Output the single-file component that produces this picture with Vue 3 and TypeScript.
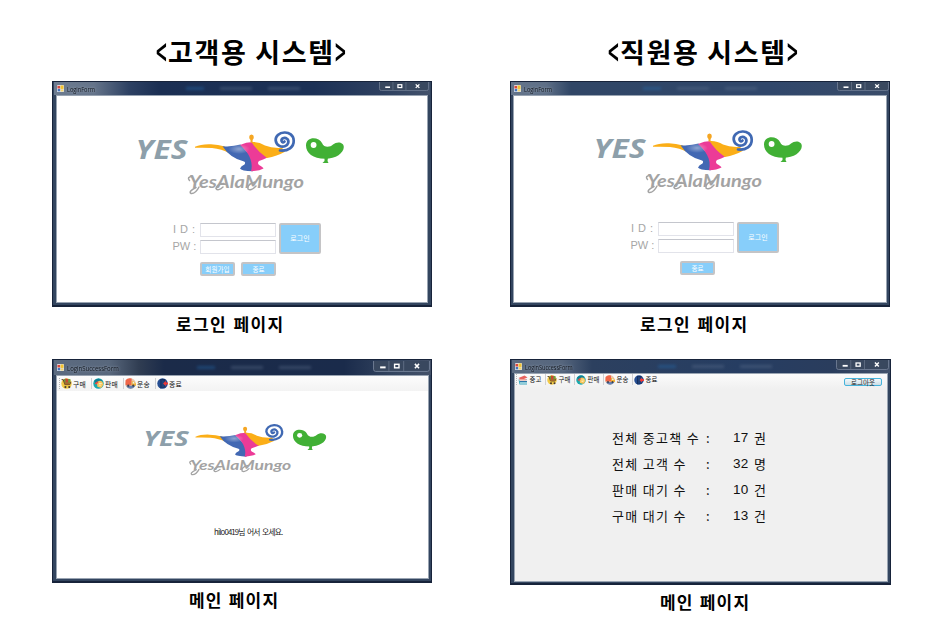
<script setup lang="ts">
interface ToolItem { icon: string; label: string }
interface Pane {
  id: string
  kind: 'login' | 'welcome' | 'stats'
  form: string
  caption: string
  signup?: boolean
  tools?: ToolItem[]
}
interface Column { id: string; heading: string; panes: Pane[] }

const buy: ToolItem = { icon: 'cart', label: '구매' }
const sell: ToolItem = { icon: 'sell', label: '판매' }
const ship: ToolItem = { icon: 'truck', label: '운송' }
const quit: ToolItem = { icon: 'exit', label: '종료' }
const used: ToolItem = { icon: 'books', label: '중고' }

const columns: Column[] = [
  {
    id: 'customer',
    heading: '고객용 시스템',
    panes: [
      { id: 'c-login', kind: 'login', form: 'LoginForm', caption: '로그인 페이지', signup: true },
      { id: 'c-main', kind: 'welcome', form: 'LoginSuccessForm', caption: '메인 페이지', tools: [buy, sell, ship, quit] },
    ],
  },
  {
    id: 'staff',
    heading: '직원용 시스템',
    panes: [
      { id: 's-login', kind: 'login', form: 'LoginForm', caption: '로그인 페이지' },
      { id: 's-main', kind: 'stats', form: 'LoginSuccessForm', caption: '메인 페이지', tools: [used, buy, sell, ship, quit] },
    ],
  },
]

const stats = [
  { label: '전체 중고책 수', value: 17, unit: '권' },
  { label: '전체 고객 수', value: 32, unit: '명' },
  { label: '판매 대기 수', value: 10, unit: '건' },
  { label: '구매 대기 수', value: 13, unit: '건' },
]
</script>

<template>
  <main class="board">
    <section v-for="col in columns" :key="col.id" class="column" :class="col.id">
      <h1 class="heading"><span class="angle">&lt;</span>{{ col.heading }}<span class="angle">&gt;</span></h1>
      <template v-for="pane in col.panes" :key="pane.id">
        <article class="window" :class="[pane.id, pane.kind]">
          <header class="titlebar">
            <svg class="app-icon" viewBox="0 0 8 8">
              <rect width="8" height="8" rx="1" fill="#dfe6f0" />
              <rect x="0.5" y="1" width="3" height="3" fill="#d9483c" />
              <rect x="4" y="0.5" width="3.5" height="4" fill="#f3c22e" />
              <rect x="0.8" y="4.6" width="2.8" height="2.6" fill="#3f72bd" />
              <rect x="4.2" y="5" width="3.2" height="2.4" fill="#f5d36a" />
            </svg>
            <span class="form-name">{{ pane.form }}</span>
            <span class="glass">
              <i></i><i></i><i></i>
            </span>
            <svg class="controls" viewBox="0 0 52 10" preserveAspectRatio="none">
              <path d="M0.5 0V7.5Q0.5 9.5 2.5 9.5H49.5Q51.5 9.5 51.5 7.5V0" fill="#39485f" stroke="#76839a" stroke-width="0.8" />
              <path d="M14.5 0V9M28 0V9" stroke="#6b788e" stroke-width="0.7" />
              <path d="M6.5 5.8h5" stroke="#fff" stroke-width="1.8" />
              <rect x="19.7" y="3" width="4" height="3.2" fill="none" stroke="#fff" stroke-width="1.3" />
              <path d="M38.2 2.6l3.8 4M42 2.6l-3.8 4" stroke="#fff" stroke-width="1.4" />
            </svg>
          </header>
          <div class="client">
            <nav v-if="pane.tools" class="toolbar">
              <span v-for="t in pane.tools" :key="t.icon" class="tool">
                <svg class="tool-icon" viewBox="0 0 20 20">
                  <template v-if="t.icon === 'cart'">
                    <circle cx="10" cy="10" r="9.5" fill="#f2ca45" />
                    <path d="M5 2h12v7H6z" fill="#69a341" />
                    <path d="M8 1l5 1v6H8z" fill="#c94731" />
                    <path d="M1 3h3l3 9h9l2-5" fill="none" stroke="#5c4328" stroke-width="1.8" />
                    <path d="M6 8h11l-2 4H7z" fill="#a5682e" />
                    <circle cx="8" cy="16.500" r="2" fill="#493b30" /><circle cx="15" cy="16.500" r="2" fill="#493b30" />
                  </template>
                  <template v-else-if="t.icon === 'sell'">
                    <circle cx="10" cy="10" r="9.5" fill="#18a9ae" />
                    <path d="M2 5Q9-2 17 4L12 8 5 10z" fill="#107f94" />
                    <path d="M7 8q5-5 10-1l2 5-4 6-7-2z" fill="#f7c35b" />
                    <path d="M3 10l5-4 2 2-4 4z" fill="#e94b43" />
                    <path d="M11 10h5M11 13h4" stroke="#fff3bd" stroke-width="1.5" />
                  </template>
                  <template v-else-if="t.icon === 'truck'">
                    <circle cx="10" cy="10" r="9.5" fill="#e9c6aa" />
                    <path d="M1 4Q5-1 12 1v12H1z" fill="#ef6649" />
                    <path d="M12 6h4l4 4v4h-8z" fill="#f4b536" />
                    <path d="M14 7h2l2 3h-4z" fill="#dff0f4" />
                    <path d="M2 14h17Q15 20 10 19.5 4 19 2 14z" fill="#6483b4" />
                    <circle cx="6" cy="14" r="2" fill="#3d3e4c" /><circle cx="15" cy="14" r="2" fill="#3d3e4c" />
                  </template>
                  <template v-else-if="t.icon === 'exit'">
                    <circle cx="10" cy="10" r="9.5" fill="#254d91" />
                    <path d="M6 2h9v15l-9 2z" fill="#142f60" />
                    <path d="M8 3l6 2v11l-6 2z" fill="#1f4178" />
                    <path d="M11 10l5-5v3h4v4h-4v3z" fill="#ee3a37" />
                  </template>
                  <template v-else>
                    <path d="M1 9h17v10H3z" fill="#38a5bd" />
                    <path d="M3 10l15 0v2H3zM4 15h14v2H4z" fill="#e9f6f5" />
                    <path d="M1 6L13 1l6 4-12 5z" fill="#e8635e" />
                    <path d="M2 8h15v3H4z" fill="#f0a39b" />
                    <path d="M4 13h14" stroke="#2768a4" stroke-width="1.5" />
                  </template>
                </svg>
                <span class="tool-label">{{ t.label }}</span>
              </span>
              <button v-if="pane.kind === 'stats'" class="logout" type="button">로그아웃</button>
            </nav>

            <svg v-if="pane.kind !== 'stats'" class="logo" viewBox="0 0 230 85" preserveAspectRatio="none">
              <defs>
                <radialGradient :id="pane.id + '-shine'" cx="0.5" cy="0.5" r="0.5">
                  <stop offset="0" stop-color="#fff" stop-opacity="0.4" />
                  <stop offset="1" stop-color="#fff" stop-opacity="0" />
                </radialGradient>
              </defs>
              <text class="yes" x="10.500" y="38.800" textLength="52" lengthAdjust="spacingAndGlyphs">YES</text>
              <path d="M70 26.800Q76 23.800 86 24.200 93 24.500 100 26.500L104 33Q97 29 87 28 79 27.400 70 27.800z" fill="#fbae17" />
              <path d="M97.500 26.200Q107 27 115.500 24.600L130 41 128 51.300Q116 51 115 48.500 116 46 119.500 44.500 121 42.500 119 41.500 105 38 97.500 26.200z" fill="#4268b3" />
              <path d="M115 25Q121 22 128 22L142.500 37.500Q138 39.500 134 41 132 43 134 45 138 47 138.500 48.500 134 51 126 51.300C129 40 122 31 115 25z" fill="#ec3b97" />
              <path d="M126.500 22Q134 21.500 140 25.500 147 28.500 157 27.800L160 31.800Q152 36.300 142 38 132 31 126.500 22z" fill="#fbae17" />
              <ellipse cx="114" cy="29" rx="11" ry="5" :fill="'url(#' + pane.id + '-shine)'" />
              <path d="M124.200 17a2.300 2.500 0 114.600 0Q128.800 19.200 127.600 20V22.500H125.500V20Q124.200 19.200 124.200 17z" fill="#f5a623" />
              <path d="M155 30.500C163 31.500 169 27 168.700 20.500 168.500 15 164 12.300 159.500 12.500 154 12.700 150.300 16.500 150.700 20.500 151.200 25 156 27.500 159.800 26.300 163.500 25.200 164.500 20.800 162 18.800 159.500 16.700 155.800 18.500 156.600 21.200 157 22.500 158.700 22.700 159.500 21.500" fill="none" stroke="#4069b3" stroke-width="2.700" stroke-linecap="round" />
              <path d="M181 25.500C181 16 194 16.500 197 23 199 28 205 27.500 208 24.500 212 21 218.800 22 218.800 27 218.800 33 211 38.800 200 38.800 188 38.800 181 33 181 25.500z" fill="#41b035" />
              <circle cx="188.600" cy="25" r="2.900" fill="#fff" />
              <path d="M199.500 37.500H203L202.500 41 203.500 43H197.500L199.500 41z" fill="#41b035" />
              <g fill="none" stroke="#a3a3a3" stroke-width="1.500" stroke-linecap="round">
                <path d="M64.500 60.500Q61.500 57 67 56.500M74 67Q70.500 74 66 73.500 63 71.500 71 67.500" />
                <path d="M99 63.500Q92 63.500 91 68.500 93 71.500 98 67" />
                <path d="M130 62Q122 64 123 69 126 71.500 131 66" />
              </g>
              <text class="brand" x="64" y="67.800" textLength="115" lengthAdjust="spacingAndGlyphs">YesAlaMungo</text>
            </svg>

            <form v-if="pane.kind === 'login'" class="login-form" @submit.prevent>
              <label class="id-label">I D :</label>
              <input class="field" type="text" />
              <button class="submit" type="button">로그인</button>
              <label class="pw-label">PW :</label>
              <input class="field" type="password" />
              <div class="actions">
                <button v-if="pane.signup" type="button">회원가입</button>
                <button type="button">종료</button>
              </div>
            </form>

            <p v-if="pane.kind === 'welcome'" class="greeting">hilo0419님 어서 오세요.</p>

            <div v-if="pane.kind === 'stats'" class="stat-list">
              <div v-for="s in stats" :key="s.label" class="stat">
                <span>{{ s.label }}</span><span>:</span>
                <span class="num">{{ s.value }}</span><span>{{ s.unit }}</span>
              </div>
            </div>
          </div>
        </article>
        <p class="caption" :class="pane.id + '-cap'">{{ pane.caption }}</p>
      </template>
    </section>
  </main>
</template>

<style>
body {
  background: #fff;
  overflow: hidden;
}
</style>

<style scoped>
.board, .board * { box-sizing: border-box; }
.board {
  width: 950px;
  height: 632px;
  padding-left: 52px;
  display: grid;
  grid-template-columns: 380px 381px;
  column-gap: 78px;
  align-items: start;
  background: #fff;
  color: #000;
  font-family: 'Noto Sans CJK KR', sans-serif;
}
.column { display: flex; flex-direction: column; }
.heading {
  margin: 0;
  height: 81px;
  padding: 32px 0 0 104px;
  font-size: 27px;
  line-height: 40px;
  font-weight: 700;
  letter-spacing: 1.650px;
  white-space: nowrap;
}
.staff .heading { padding-left: 98px; }
.angle { display: inline-block; width: 12px; letter-spacing: 0; font-weight: 500; transform: scale(0.7, 1.450); transform-origin: left 54%; }

.window {
  width: 380px;
  height: 226px;
  padding: 0 3px 2px 3px;
  display: flex;
  flex-direction: column;
  background: #33455f;
  border: 1px solid #17233a;
  border-bottom-width: 2px;
}
.s-login { padding: 0 2px 2px 2px; }
.c-main { height: 224px; padding: 0 2px 2px 3px; }
.s-main { width: 381px; height: 226px; padding: 0 2px 1px 3px; }
.titlebar {
  flex: none;
  height: 13px;
  margin: 0 -2px;
  padding-left: 3px;
  display: flex;
  align-items: center;
  background: linear-gradient(90deg, #6d7c90 0, #65748a 40px, #2d4163 75px, #1b2f53 105px, #1c3156 260px, #2e4060 330px, #44536c 380px);
}
.s-login .titlebar { background: linear-gradient(90deg, #65758b 0, #5e6f87 35px, #304666 60px, #30476b 260px, #3a4c69 380px); }
.c-main .titlebar { height: 15px; background: linear-gradient(90deg, #5c6b80 0, #58677c 55px, #303d52 85px, #1b2b49 110px, #1a2b4b 290px, #344560 340px, #455269 380px); }
.s-main .titlebar { background: linear-gradient(90deg, #5c6b81 0, #56667d 50px, #2c405f 80px, #263d62 230px, #2a3d5d 320px, #43526b 380px); }
.app-icon { width: 7px; height: 7px; flex: none; margin-right: 2.500px; }
.form-name {
  flex: none;
  font: 8px/13px 'Open Sans', sans-serif;
  color: #10151d;
  text-shadow: 0 0 3px #a9b4c2;
  white-space: nowrap;
  transform: scaleX(0.7);
  transform-origin: left;
}
.c-main .form-name { transform: scaleX(0.750); }
.s-main .form-name { transform: scaleX(0.690); }
.glass { flex: 1; align-self: stretch; display: flex; align-items: center; justify-content: center; gap: 16px; filter: blur(1.500px); opacity: 0.4; }
.glass i { width: 32px; height: 3px; background: #60738f; }
.glass i:first-child { width: 18px; background: #246fb4; }
.controls { flex: none; width: 50px; height: 9px; align-self: flex-start; margin-right: 1px; }
.s-login .controls { width: 52px; margin-right: 0; }
.c-main .controls { width: 57px; height: 11px; margin-top: 1px; margin-right: 1px; }
.s-main .controls { width: 53px; height: 10px; margin-right: 1px; }
.client {
  flex: 1;
  min-height: 0;
  background: #fff;
  border: 1px solid #99a4b2;
  display: flex;
  flex-direction: column;
}
.s-main .client { background: #f0f0f0; }

.logo { flex: none; display: block; width: 230px; height: 85px; margin: 24px 0 0 68px; }
.s-login .logo { margin: 23px 0 0 68.500px; }
.c-main .logo { width: 202px; height: 69px; margin: 23.500px 0 0 77px; }
.yes { font: italic 700 26px 'Open Sans', sans-serif; fill: #8d9faa; }
.brand { font: italic 700 16.500px Lato, sans-serif; fill: #a3a3a3; }

.login-form {
  margin: 18px 0 0 115px;
  display: grid;
  grid-template-columns: 25px 76px 42px;
  grid-template-rows: 14px 14px 14px;
  column-gap: 3px;
  row-gap: 3px;
  color: #a6a6a6;
}
.s-login .login-form { margin-left: 116px; }
.login-form label { font: 11px/13px 'Liberation Sans', sans-serif; white-space: nowrap; }
.id-label { padding-left: 1px; letter-spacing: 0.450px; }
.pw-label { padding-left: 0.500px; }
.field { width: 76px; height: 14px; padding: 0; border: 1px solid #e2e3ea; border-top-color: #c4c6cd; background: #fff; outline: none; }
.login-form button {
  border: 2px solid #c4c4c6;
  border-radius: 2px;
  background: #87cefa;
  color: #fff;
  font: 7px/8px 'Noto Sans CJK KR', sans-serif;
  padding: 0;
  white-space: nowrap;
}
.login-form .submit { grid-column: 3; grid-row: 1 / span 2; padding-bottom: 2px; }
.actions { grid-column: 2; display: flex; justify-content: space-between; margin-top: 5px; height: 14px; }
.actions button { width: 35px; height: 14px; flex: none; }
.login-form .actions button { font-size: 6.600px; }
.s-login .actions { padding-left: 22px; }

.toolbar {
  flex: none;
  height: 14px;
  padding-left: 2px;
  display: flex;
  align-items: center;
  background: linear-gradient(#fcfcfc, #f3f3f3);
}
.c-main .toolbar { height: 15px; }
.s-main .toolbar { height: 15px; background: linear-gradient(#fbfbfb, #f0f0f0); }
.tool { flex: none; width: 32px; height: 11px; display: flex; align-items: center; gap: 1px; padding-left: 1px; border-left: 1px solid #d0d0d2; }
.tool:first-child { border-left: 1px dotted #b6b6b6; }
.tool-icon { flex: none; width: 11px; height: 11px; }
.tool-label { font-size: 6.800px; line-height: 10px; letter-spacing: 0.150px; color: #111; white-space: nowrap; }
.s-main .toolbar { padding-left: 1px; align-items: flex-start; }
.s-main .tool { width: 29px; gap: 1.500px; }
.s-main .tool-icon { width: 10px; height: 10px; }
.s-main .tool-label { font-size: 6.400px; letter-spacing: 0; }
.logout {
  margin: 4px 5px 0 auto;
  width: 38px;
  height: 8px;
  padding: 0;
  border: 1px solid #45b4dc;
  border-radius: 2px;
  background: linear-gradient(#f4f8fa, #cbdde6);
  font: 6.500px/6px 'Noto Sans CJK KR', sans-serif;
  color: #222;
}

.greeting { margin: 43.500px 0 0 157px; font-size: 7.800px; line-height: 10px; letter-spacing: -0.850px; word-spacing: 1.500px; color: #222; white-space: nowrap; }

.stat-list { margin: 36px 0 0 97px; }
.stat { display: grid; grid-template-columns: 94px 27px 21px 20px; height: 26px; line-height: 26px; font-size: 13px; letter-spacing: 1.300px; color: #111; white-space: nowrap; }
.num { letter-spacing: 0.300px; font-family: 'Liberation Sans', sans-serif; font-size: 13.500px; }

.caption {
  margin: 0;
  height: 52px;
  padding: 4px 0 0 124px;
  font-size: 17px;
  line-height: 26px;
  font-weight: 700;
  letter-spacing: 1.400px;
  word-spacing: 1px;
  white-space: nowrap;
}
.s-login-cap { padding-left: 130px; }
.c-main-cap { height: 40px; padding-left: 137px; letter-spacing: 1.200px; }
.s-main-cap { height: 40px; padding-left: 150px; letter-spacing: 1.200px; }
</style>
